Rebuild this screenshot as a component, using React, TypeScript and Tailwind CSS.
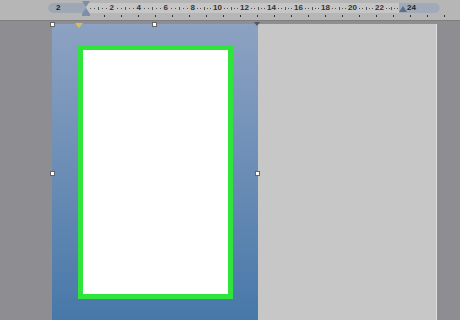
import React from "react";

const nums = ["2", "4", "6", "8", "10", "12", "14", "16", "18", "20", "22"];

function Dots({ w }: { w: string }) {
  return (
    <div className={`${w} h-full flex items-center justify-around`}>
      <span className="w-[1px] h-[1px] bg-[#555]" />
      <span className="w-[1px] h-[1px] bg-[#555]" />
      <span className="w-[1px] h-[3px] bg-[#555]" />
      <span className="w-[1px] h-[1px] bg-[#555]" />
      <span className="w-[1px] h-[1px] bg-[#555]" />
    </div>
  );
}

function Cell({ n }: { n: string }) {
  return (
    <div className="w-[27px] h-full flex items-center text-[8px] leading-none text-[#333]">
      <Dots w="flex-1" />
      <span className="font-bold px-[1px]">{n}</span>
    </div>
  );
}

function Handle() {
  return <div className="w-[5px] h-[5px] border border-[#666] bg-white" />;
}

export default function App() {
  return (
    <div className="w-[460px] h-[320px] overflow-hidden bg-[#8e8e92] flex flex-col" style={{ fontFamily: "'Liberation Sans', Arial, sans-serif" }}>
      <div className="h-[21px] bg-[#b6b6b6] border-b border-[#7e7e7e] relative">
        <div className="absolute left-[48px] top-[3px] w-[392px] h-[10px] rounded-full bg-[#c6c6c6] flex items-center overflow-hidden">
          <div className="w-[38px] h-full bg-[#9ea7b4] flex items-center pl-[8px] text-[8px] font-bold text-[#222]">2</div>
          <div className="flex h-full items-center pl-[2px]">
            {nums.map((n) => (
              <Cell key={n} n={n} />
            ))}
          </div>
          <Dots w="w-[14px]" />
          <div className="flex-1 h-full bg-[#a0aab8] flex items-center pl-[8px] text-[8px] font-bold text-[#222]">24</div>
        </div>
        <div className="absolute left-[82px] top-[1px] w-[8px] h-[16px] flex flex-col items-center">
          <div className="w-0 h-0 border-l-[4px] border-r-[4px] border-t-[6px] border-l-transparent border-r-transparent border-t-[#7d8fa8]" />
          <div className="w-0 h-0 border-l-[4px] border-r-[4px] border-b-[6px] border-l-transparent border-r-transparent border-b-[#7d8fa8] mt-[1px]" />
          <div className="w-[8px] h-[2px] bg-[#7d8fa8]" />
        </div>
        <div className="absolute left-[399px] top-[6px] w-0 h-0 border-l-[4px] border-r-[4px] border-b-[6px] border-l-transparent border-r-transparent border-b-[#5d6f88]" />
        <div className="absolute left-[104px] top-[15px] flex gap-[16px]">
          {Array.from({ length: 22 }).map((_, i) => (
            <span key={i} className="w-[1px] h-[2px] bg-[#333]" />
          ))}
        </div>
      </div>
      <div className="flex flex-1 pt-[3px]">
        <div className="w-[52px]" />
        <div className="relative w-[385px] flex border-r border-[#e0e0e0]">
          <div className="w-[206px] h-full bg-gradient-to-b from-[#8da2c2] to-[#4778a9] pl-[26px] pt-[21px]">
            <div className="w-[155px] h-[254px] bg-white border-[5px] border-[#2fe53b]" />
          </div>
          <div className="flex-1 bg-[#c7c7c7]" />
          <div className="absolute left-[-2px] top-[-2px]"><Handle /></div>
          <div className="absolute left-[100px] top-[-2px]"><Handle /></div>
          <div className="absolute left-[-2px] top-[147px]"><Handle /></div>
          <div className="absolute left-[203px] top-[147px]"><Handle /></div>
          <div className="absolute left-[23px] top-[-1px] w-0 h-0 border-l-[4px] border-r-[4px] border-t-[5px] border-l-transparent border-r-transparent border-t-[#d8c050]" />
          <div className="absolute left-[202px] top-[-2px] w-0 h-0 border-l-[3px] border-r-[3px] border-t-[4px] border-l-transparent border-r-transparent border-t-[#556]" />
        </div>
      </div>
    </div>
  );
}
